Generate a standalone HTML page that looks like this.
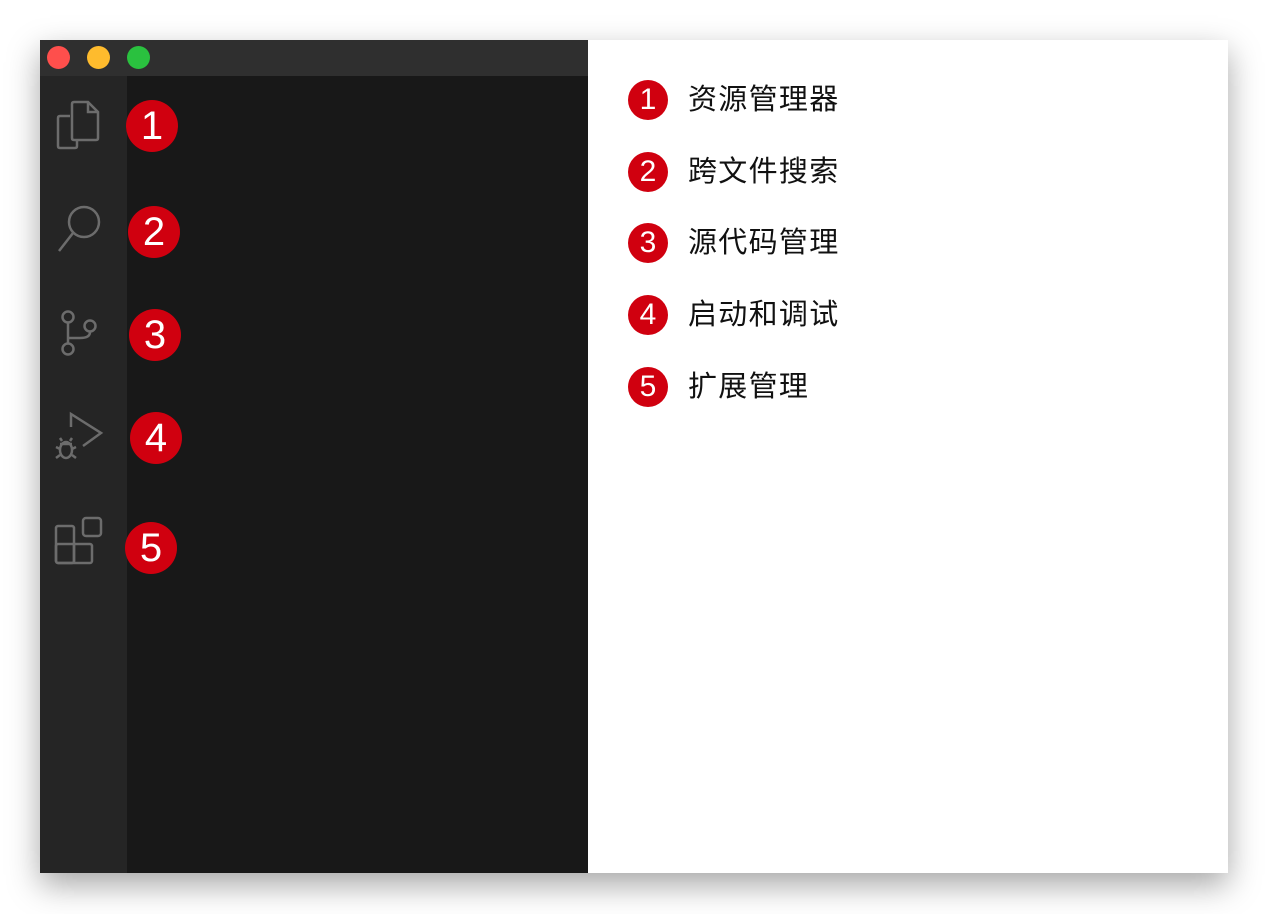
<!DOCTYPE html>
<html><head><meta charset="utf-8"><style>
body{margin:0;width:1268px;height:914px;background:#fff;position:relative;overflow:hidden;font-family:"Liberation Sans","Noto Sans CJK SC",sans-serif}
.win{position:absolute;left:40px;top:40px;width:1188px;height:833px;box-shadow:0 12px 30px rgba(0,0,0,.35);background:#fff}
.title{position:absolute;left:0;top:0;width:548px;height:36px;background:#2f2f2f}
.dot{position:absolute;top:6px;width:23px;height:23px;border-radius:50%}
.act{position:absolute;left:0;top:36px;width:87px;height:797px;background:#252525}
.ed{position:absolute;left:87px;top:36px;width:461px;height:797px;background:#181818}
.b{position:absolute;width:52px;height:52px;border-radius:50%;background:#d0000f;color:#fff;font-size:40px;line-height:52px;text-align:center}
.s{position:absolute;width:40px;height:40px;border-radius:50%;background:#d0000f;color:#fff;font-size:30px;line-height:40px;text-align:center;left:628px}
.t{position:absolute;left:688px;font-size:29px;color:#111;line-height:40px;letter-spacing:1.3px}
</style></head><body>
<div class="win">
<div class="title">
<div class="dot" style="left:7px;background:#fe4f4c"></div>
<div class="dot" style="left:47px;background:#febb2d"></div>
<div class="dot" style="left:87px;background:#2ac13f"></div>
</div>
<div class="act"></div><div class="ed"></div>
</div>
<svg style="position:absolute;left:0;top:0" width="1268" height="914" fill="none" stroke="#6c6c6c" stroke-width="2.5">
<path d="M70 116H60Q58 116 58 118V146Q58 148 60 148H75Q77 148 77 146V141"/>
<path d="M72 104Q72 102 74 102H88L98 112V138Q98 140 96 140H74Q72 140 72 138Z"/>
<path d="M88 102V112H98"/>
<circle cx="84" cy="222" r="15"/><path d="M73 233L59 251"/>
<circle cx="68" cy="317" r="5.5"/><circle cx="68" cy="349" r="5.5"/><circle cx="90" cy="326" r="5.5"/>
<path d="M68 323V343M90 332Q90 338 80 338H68"/>
<path d="M71 427V414L101 433L83 446"/>
<ellipse cx="66" cy="450" rx="6" ry="8"/><path d="M60 444H72M56 447l4 2M76 447l-4 2M56 458l4-3M76 458l-4-3M62 441l-2-3M70 441l2-3"/>
<rect x="56" y="526" width="18" height="37" rx="2"/><rect x="56" y="544" width="36" height="19" rx="2"/><path d="M74 544V563"/>
<rect x="83" y="518" width="18" height="18" rx="3"/>
</svg>
<div class="b" style="left:126px;top:100px">1</div>
<div class="b" style="left:128px;top:206px">2</div>
<div class="b" style="left:129px;top:309px">3</div>
<div class="b" style="left:130px;top:412px">4</div>
<div class="b" style="left:125px;top:522px">5</div>
<div class="s" style="top:80px">1</div><div class="t" style="top:80px">资源管理器</div>
<div class="s" style="top:152px">2</div><div class="t" style="top:152px">跨文件搜索</div>
<div class="s" style="top:223px">3</div><div class="t" style="top:223px">源代码管理</div>
<div class="s" style="top:295px">4</div><div class="t" style="top:295px">启动和调试</div>
<div class="s" style="top:367px">5</div><div class="t" style="top:367px">扩展管理</div>
</body></html>
